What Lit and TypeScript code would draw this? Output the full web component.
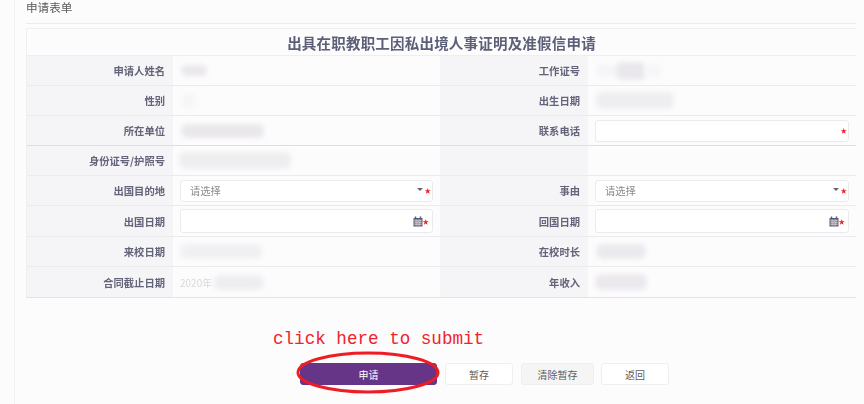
import { LitElement, html, css, nothing } from "lit";
import { customElement } from "lit/decorators.js";

type Blob = { w: number; h?: number; x?: number; c?: string };
type Cell = { label: string; blob?: Blob[]; note?: string; control?: "text" | "select" | "date" };

const rows: { cells: [Cell, Cell]; h: number }[] = [
  { h: 30, cells: [{ label: "申请人姓名", blob: [{ w: 26, h: 11, x: 1, c: "#e9e7eb" }] }, { label: "工作证号", blob: [{ w: 22, h: 13, x: 1, c: "#f5f4f6" }, { w: 30, h: 18, x: -2, c: "#e9e7eb" }, { w: 18, h: 12, x: -2, c: "#f6f5f7" }] }] },
  { h: 30, cells: [{ label: "性别", blob: [{ w: 13, h: 16, x: 2, c: "#f6f5f7" }] }, { label: "出生日期", blob: [{ w: 78, h: 17, x: 1, c: "#eeedf0" }] }] },
  { h: 30, cells: [{ label: "所在单位", blob: [{ w: 83, h: 14, x: 1, c: "#e9e7eb" }] }, { label: "联系电话", control: "text" }] },
  { h: 30, cells: [{ label: "身份证号/护照号", blob: [{ w: 112, h: 17, x: -1, c: "#eeedf0" }] }, { label: "" }] },
  { h: 30, cells: [{ label: "出国目的地", control: "select" }, { label: "事由", control: "select" }] },
  { h: 31, cells: [{ label: "出国日期", control: "date" }, { label: "回国日期", control: "date" }] },
  { h: 30, cells: [{ label: "来校日期", blob: [{ w: 82, h: 15, x: 0, c: "#f0eff2" }] }, { label: "在校时长", blob: [{ w: 50, h: 15, x: 1, c: "#ebe9ed" }] }] },
  { h: 30, cells: [{ label: "合同截止日期", note: "2020年", blob: [{ w: 50, h: 15, x: 2, c: "#eeedf0" }] }, { label: "年收入", blob: [{ w: 52, h: 16, x: 0, c: "#ebe9ed" }] }] },
];

const calendar = html`<svg class="cal" width="10" height="11" viewBox="0 0 10 11" aria-hidden="true">
  <path d="M0.5 2h9v8.5h-9z" fill="#5f5a72"/>
  <path d="M2.5 0.5v2M7.5 0.5v2" stroke="#5f5a72" stroke-width="1.5"/>
  <path d="M1.2 4.2h7.6M1.2 6.2h7.6M1.2 8.2h7.6M3.1 3.8v6M5 3.8v6M6.9 3.8v6" stroke="#efedf2" stroke-width="0.7"/>
</svg>`;

@customElement("app-root")
export class AppRoot extends LitElement {
  static styles = css`
    :host {
      display: block;
      position: relative;
      width: 864px;
      height: 404px;
      overflow: hidden;
      background: #fdfcfd;
      font-family: "Noto Sans CJK SC", "Liberation Sans", sans-serif;
      color: #5d5d6e;
    }
    .page {
      height: 404px;
      box-sizing: border-box;
      margin-left: 14px;
      border-left: 1px solid #f2f1f3;
      padding-left: 11px;
      padding-right: 8px;
      filter: blur(0.35px);
    }
    .head {
      height: 24px;
      box-sizing: border-box;
      font-size: 11.6px;
      line-height: 14px;
      color: #5a5a5a;
      border-bottom: 1px solid #ececee;
    }
    .table {
      margin-top: 4px;
      border-top: 1px solid #efeef0;
      border-left: 1px solid #efeef0;
      border-bottom: 1px solid #e4e3e6;
    }
    .title {
      height: 26px;
      display: flex;
      align-items: center;
      justify-content: center;
      font-size: 14.5px;
      letter-spacing: 0.2px;
      font-weight: 700;
      color: #5b5f78;
      border-bottom: 1px solid #eeedef;
    }
    .row {
      display: grid;
      grid-template-columns: 146px 267px 148px 268px;
      box-sizing: border-box;
      border-bottom: 1px solid #ebeaec;
    }
    .row:last-child { border-bottom: 0; }
    .row.strong { border-bottom-color: #dfdee1; }
    .lab {
      background: #f5f4f6;
      display: flex;
      align-items: center;
      justify-content: flex-end;
      padding-right: 8px;
      font-size: 10.3px;
      font-weight: 700;
      color: #63637a;
    }
    .val {
      display: flex;
      align-items: center;
      padding: 0 7px;
      min-width: 0;
    }
    .note-text { font-size: 10px; color: #d9d8db; filter: blur(0.5px); flex: none; }
    .blob { filter: blur(2.5px); border-radius: 6px; flex: none; }
    .field {
      flex: 1;
      height: 22px;
      box-sizing: border-box;
      border: 1px solid #eceaee;
      border-radius: 3px;
      background: #fff;
      display: flex;
      align-items: center;
      padding: 0 1px 0 9px;
      font-size: 10.3px;
      color: #8a8a8a;
    }
    .field.date { height: 24px; padding-right: 3px; }
    .spacer { flex: 1; }
    .star { color: #f0202a; font-size: 6.5px; line-height: 7px; }
    .caret {
      width: 0;
      height: 0;
      border-left: 3px solid transparent;
      border-right: 3px solid transparent;
      border-top: 3px solid #666;
      margin-right: 2px;
      margin-top: -2px;
    }
    .cal { flex: none; }
    .actions {
      position: absolute;
      left: 300px;
      top: 363px;
      display: flex;
      gap: 8px;
    }
    .btn {
      height: 22px;
      box-sizing: border-box;
      border: 1px solid #efeef0;
      border-radius: 3px;
      background: #fff;
      display: flex;
      align-items: center;
      justify-content: center;
      font-size: 10px;
      color: #5c5c5c;
      font-family: inherit;
      padding: 0;
    }
    .primary { width: 137px; background: #663587; border-color: #663587; color: #fff; }
    .w66 { width: 68px; }
    .w72 { width: 73px; background: #f6f5f6; }
    .w68 { width: 68px; margin-left: -1px; }
    .note {
      position: absolute;
      left: 273px;
      top: 329px;
      font-family: "Liberation Mono", monospace;
      font-size: 17.6px;
      line-height: 20px;
      color: #f0232b;
      white-space: pre;
    }
    .ring { position: absolute; left: 295px; top: 350px; pointer-events: none; }
  `;

  private renderVal(c: Cell) {
    if (c.control === "text") {
      return html`<div class="field"><span class="spacer"></span><span class="star">★</span></div>`;
    }
    if (c.control === "select") {
      return html`<div class="field">请选择<span class="spacer"></span><span class="caret"></span><span class="star">★</span></div>`;
    }
    if (c.control === "date") {
      return html`<div class="field date"><span class="spacer"></span>${calendar}<span class="star">★</span></div>`;
    }
    return html`${c.note ? html`<span class="note-text">${c.note}</span>` : nothing}${(c.blob ?? []).map(
      (b) => html`<div class="blob" style="width:${b.w}px;height:${b.h ?? 12}px;margin-left:${b.x ?? 0}px;background:${b.c}"></div>`
    )}`;
  }

  render() {
    return html`
      <div class="page">
        <div class="head">申请表单</div>
        <div class="table">
          <div class="title">出具在职教职工因私出境人事证明及准假信申请</div>
          ${rows.map(
            (r, i) => html`<div class="row ${i === 2 ? "strong" : ""}" style="height:${r.h}px">
              ${r.cells.map(
                (c) => html`<div class="lab">${c.label || nothing}</div><div class="val">${this.renderVal(c)}</div>`
              )}
            </div>`
          )}
        </div>
      </div>
      <div class="note">click here to submit</div>
      <div class="actions">
        <button class="btn primary">申请</button>
        <button class="btn w66">暂存</button>
        <button class="btn w72">清除暂存</button>
        <button class="btn w68">返回</button>
      </div>
      <svg class="ring" width="150" height="48" viewBox="0 0 150 48" aria-hidden="true">
        <ellipse cx="73" cy="22.5" rx="70" ry="19.5" fill="none" stroke="#ee1c25" stroke-width="3"/>
      </svg>
    `;
  }
}
